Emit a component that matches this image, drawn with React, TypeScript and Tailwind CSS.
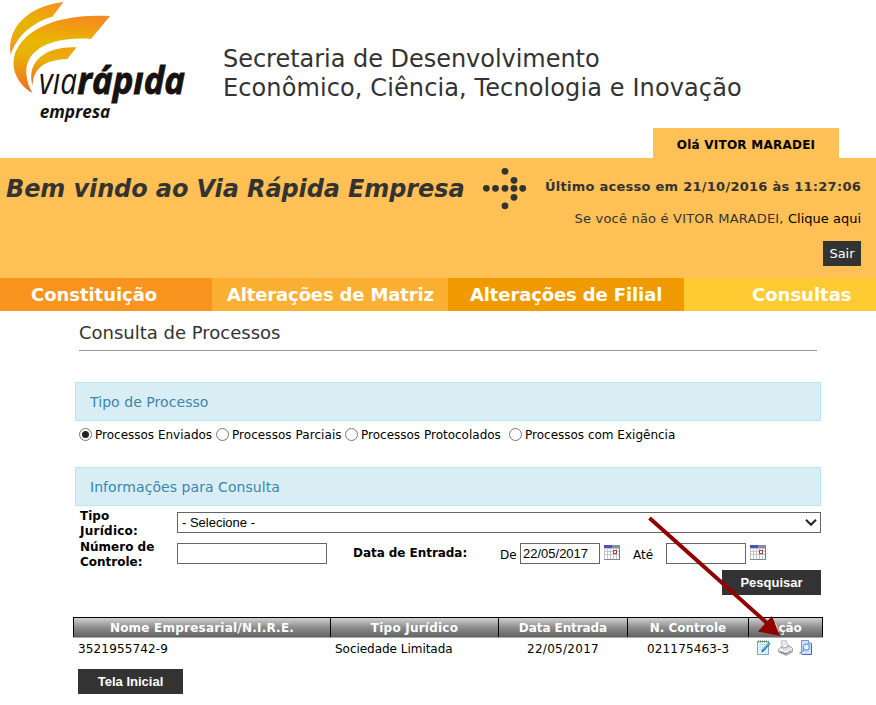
import type { ReactNode } from "react";

function Logo() {
  return (
    <svg width="220" height="128" viewBox="0 0 660 384" className="block shrink-0">
      <defs>
        <linearGradient id="flameOuter" x1="0.7" y1="0" x2="0.45" y2="1">
          <stop offset="0" stopColor="#f5921e" />
          <stop offset="0.42" stopColor="#e8b400" />
          <stop offset="0.7" stopColor="#e6ae08" />
          <stop offset="1" stopColor="#f5921e" />
        </linearGradient>
        <linearGradient id="flameMain" x1="0.6" y1="0" x2="0.5" y2="1">
          <stop offset="0" stopColor="#f58a1f" />
          <stop offset="0.34" stopColor="#e8b600" />
          <stop offset="0.55" stopColor="#e8b205" />
          <stop offset="1" stopColor="#f36f21" />
        </linearGradient>
        <linearGradient id="flameInner" x1="0.6" y1="0" x2="0.45" y2="1">
          <stop offset="0" stopColor="#f0a010" />
          <stop offset="0.35" stopColor="#e8b20a" />
          <stop offset="1" stopColor="#f36f21" />
        </linearGradient>
      </defs>
      <path d="M190 6 L157 50 C102 64 48 108 32 165 C20 85 80 20 190 6Z" fill="url(#flameOuter)" />
      <path d="M330 48 L273 117 C155 108 68 150 80 229 C82 248 88 265 98 279 C45 250 28 190 50 149 C88 75 195 40 330 48Z" fill="url(#flameMain)" />
      <path d="M230 142 L202 177 C145 178 98 200 98 257 C78 190 130 138 230 142Z" fill="url(#flameInner)" />
      <text x="117" y="281" textLength="114" lengthAdjust="spacingAndGlyphs" fill="#17120f" className="font-['Open_Sans',sans-serif] text-[110px] font-normal italic">vıa</text>
      <text x="232" y="281" textLength="323" lengthAdjust="spacingAndGlyphs" fill="#17120f" stroke="#17120f" strokeWidth="2.5" className="font-['Open_Sans',sans-serif] text-[110px] font-bold italic">rápıda</text>
      <text x="119" y="353" textLength="212" lengthAdjust="spacingAndGlyphs" fill="#17120f" className="font-['Open_Sans',sans-serif] text-[54px] font-bold italic">empresa</text>
    </svg>
  );
}

const dots = [[505, 171], [514, 180], [486.3, 188], [495.5, 188], [505, 188], [514, 188], [522.7, 188], [514, 197], [505, 205.5]];

function DotArrow() {
  return (
    <svg width="44" height="44" viewBox="483 167 44 44" className="ml-[16px] mt-[9px] block shrink-0">
      {dots.map(([x, y]) => (
        <circle key={`${x}-${y}`} cx={x} cy={y + 0.3} r="3.4" fill="#333" />
      ))}
    </svg>
  );
}

function SectionTitle({ children }: { children: ReactNode }) {
  return (
    <div className="ml-[75px] flex h-[39px] w-[746px] items-center border border-[#b8e8f0] bg-[#d9edf5] pl-[14px] pt-px text-[14px] tracking-[0.06px] text-[#3a87ad]">
      {children}
    </div>
  );
}

function Radio({ label, checked, className }: { label: string; checked?: boolean; className: string }) {
  return (
    <label className={`flex shrink-0 items-center whitespace-nowrap ${className}`}>
      <span className="-mt-[2px] mr-[3px] flex size-[13px] items-center justify-center rounded-full border border-[#777] bg-white">
        {checked && <span className="size-[7px] rounded-full bg-[#222]" />}
      </span>
      {label}
    </label>
  );
}

function CalendarIcon() {
  return (
    <svg width="16" height="15" viewBox="0 0 16 15" shapeRendering="crispEdges" className="block shrink-0">
      <rect width="16" height="15" fill="#c5c5ce" />
      <rect width="8" height="3" fill="#4a55b0" />
      <rect x="8" width="8" height="3" fill="#8b8b9b" />
      {[1, 4, 7, 10, 13].map((x) =>
        [4, 7, 10, 12].map((y) => <rect key={`${x}-${y}`} x={x} y={y} width="2" height="2" fill="#fff" />),
      )}
      <rect x="9.5" y="5.5" width="3" height="3" fill="#fff" stroke="#b03a3a" />
      <rect x="15" y="3" width="1" height="12" fill="#777" />
      <rect y="14" width="16" height="1" fill="#888" />
    </svg>
  );
}

function EditIcon() {
  return (
    <svg width="14" height="15" viewBox="0 0 14 15" className="block">
      <path d="M.5 1.5h11v13H.5z" fill="#e6f3fd" stroke="#7fa3c8" />
      <path d="M2.5 4.5h6M2.5 7h4M2.5 9.5h3M8 12.5h2" stroke="#bcd6ee" />
      <path d="M1 1.5h10.5" stroke="#4e8a62" strokeWidth="2" strokeDasharray="1 1" />
      <path d="M4.6 12l.8-3L11.6 2l2 1.6L7.4 10.9z" fill="#2f86c8" />
      <path d="M6.2 9.2l5.4-6" stroke="#8fe0ff" />
      <path d="M4.4 12.4l.6-2L6.4 11.5z" fill="#333" />
    </svg>
  );
}

function PrinterIcon() {
  return (
    <svg width="15" height="16" viewBox="0 0 15 16" className="block">
      <path d="M3 1l5-.7L10.5 7 5 9z" fill="#fff" stroke="#aab" strokeWidth=".8" />
      <path d="M4.3 3l3.8-.8M5 5l3.7-.9" stroke="#b5c5df" strokeWidth=".8" />
      <path d="M.6 9l3.6-2.6 1.2 1.8 4.9-1.8.1-1 3.9 2.7v4l-6 3.3L.6 12z" fill="#dcdee3" stroke="#858993" strokeWidth=".8" />
      <path d="M.9 9.3l7.4 2.5 5.6-3.4" fill="none" stroke="#fff" />
      <path d="M2 11.5l6 2.4 5-2.7" fill="none" stroke="#6a6f7c" strokeWidth="1" />
      <path d="M10 12.7l1.6-.8" stroke="#e1a63b" strokeWidth="1.2" />
    </svg>
  );
}

function PreviewIcon() {
  return (
    <svg width="14" height="15" viewBox="0 0 14 15" className="block">
      <path d="M2.5.5h7l3 3v11h-10z" fill="#cfe0fb" stroke="#7796d8" />
      <path d="M12.5 3.5v11h-9" fill="none" stroke="#4a68b4" />
      <path d="M9.5.5v3h3" fill="#fff" stroke="#7796d8" />
      <circle cx="7.3" cy="7.2" r="3" fill="#eefaff" stroke="#6a9ade" strokeWidth="1.2" />
      <path d="M5.1 9.5L1.2 13.2" stroke="#8ba8d0" strokeWidth="1.8" strokeLinecap="round" />
    </svg>
  );
}

const th = "flex h-[19px] items-center justify-center border-r border-black pt-px";

export default function App() {
  return (
    <div className="relative h-[705px] w-[876px] overflow-hidden bg-white font-['DejaVu_Sans',Verdana,sans-serif] text-[12px] leading-[15px] text-black">
      <header className="flex h-[128px]">
        <Logo />
        <h1 className="ml-[3px] mt-[45px] whitespace-nowrap text-[24px] leading-[29px] text-[#333]">
          <span className="tracking-[-0.03px]">Secretaria de Desenvolvimento</span>
          <br />
          <span className="tracking-[0.11px]">Econômico, Ciência, Tecnologia e Inovação</span>
        </h1>
      </header>
      <div className="ml-[653px] flex h-[30px] w-[186px] items-center justify-center bg-[#ffc055] pt-[4px] font-bold tracking-[0.24px]">
        Olá VITOR MARADEI
      </div>
      <section className="flex h-[120px] bg-[#ffc055] text-[#333]">
        <h2 className="ml-[6px] mt-[16px] w-[461px] whitespace-nowrap text-[24px] font-bold italic leading-[30px] tracking-[-0.11px]">
          Bem vindo ao Via Rápida Empresa
        </h2>
        <DotArrow />
        <div className="mr-[15px] flex flex-1 flex-col items-end whitespace-nowrap text-[13px] leading-[16px]">
          <p className="mt-[21px] font-bold tracking-[0.26px]">Último acesso em 21/10/2016 às 11:27:06</p>
          <p className="mt-[16px]">
            <span className="tracking-[0.2px]">Se você não é VITOR MARADEI, </span>
            <a className="text-black">Clique aqui</a>
          </p>
          <button className="mt-[14px] flex h-[25px] w-[38px] items-center justify-center bg-[#333] text-white">Sair</button>
        </div>
      </section>
      <nav className="flex h-[33px] whitespace-nowrap text-[18px] font-bold leading-[33px] text-white">
        <a className="w-[212px] bg-[#f9941e] pl-[31px] tracking-[-0.05px]">Constituição</a>
        <a className="w-[236px] bg-[#fbb034] pl-[15px] tracking-[-0.14px]">Alterações de Matriz</a>
        <a className="w-[236px] bg-[#f09a00] pl-[22px] tracking-[-0.12px]">Alterações de Filial</a>
        <a className="w-[192px] bg-[#ffcb33] pl-[68px]">Consultas</a>
      </nav>

      <main>
        <h3 className="ml-[78px] mr-[59px] mt-[11px] h-[29px] whitespace-nowrap pl-px text-[18px] leading-[22px] text-[#333]">
          Consulta de Processos
        </h3>
        <div className="mb-[31px] ml-[79px] -mt-px h-px w-[738px] bg-[#999]" />
        <SectionTitle>Tipo de Processo</SectionTitle>
        <div className="ml-[79px] mt-[6px] flex h-[16px]">
          <Radio label="Processos Enviados" checked className="w-[137px]" />
          <Radio label="Processos Parciais" className="w-[129px] tracking-[0.06px]" />
          <Radio label="Processos Protocolados" className="w-[164px]" />
          <Radio label="Processos com Exigência" className="w-[180px]" />
        </div>
        <div className="mt-[24px]">
          <SectionTitle>Informações para Consulta</SectionTitle>
        </div>

        <form className="ml-[75px] mt-[2px] w-[746px]">
          <div className="flex h-[31px]">
            <b className="mt-px w-[102px] pl-[5px]">
              Tipo
              <br />
              <span className="tracking-[0.25px]">Jurídico:</span>
            </b>
            <div className="mt-[4px] flex h-[21px] w-[644px] items-center justify-between border border-[#666] pl-[4px] pr-[3px] font-['Liberation_Sans',Arial,sans-serif] text-[13px]">
              <span>- Selecione -</span>
              <svg width="12" height="8" viewBox="0 0 12 8" className="block">
                <path d="M1 .8l5 5 5-5" fill="none" stroke="#222" strokeWidth="2" />
              </svg>
            </div>
          </div>
          <div className="flex h-[31px]">
            <b className="mt-px w-[102px] whitespace-nowrap pl-[5px]">
              Número de
              <br />
              Controle:
            </b>
            <div className="mt-[4px] h-[21px] w-[150px] border border-[#666]" />
            <b className="ml-[26px] mt-[7px] w-[147px] whitespace-nowrap tracking-[-0.05px]">Data de Entrada:</b>
            <span className="mt-[9px] w-[20px]">De</span>
            <div className="mt-[4px] flex h-[21px] w-[80px] items-center border border-[#666] pl-[2px] font-['Liberation_Sans',Arial,sans-serif] text-[13px]">
              22/05/2017
            </div>
            <span className="ml-[4px] mt-[6px]">
              <CalendarIcon />
            </span>
            <span className="ml-[13px] mt-[9px] w-[33px]">Até</span>
            <div className="mt-[4px] h-[21px] w-[80px] border border-[#666]" />
            <span className="ml-[4px] mt-[6px]">
              <CalendarIcon />
            </span>
          </div>
          <div className="flex justify-end">
            <span className="flex h-[25px] w-[99px] items-center justify-center bg-[#333] font-['Liberation_Sans',Arial,sans-serif] text-[13px] font-bold text-white">
              Pesquisar
            </span>
          </div>
        </form>

        <div className="ml-[73px] mt-[22px] w-[750px] whitespace-nowrap">
          <div className="flex h-[20px] border-l border-t border-black bg-linear-to-b from-[#d2d2d2] via-[#8d8d8d] to-[#626262] font-bold text-white">
            <div className={`${th} w-[257px] tracking-[0.22px]`}>Nome Empresarial/N.I.R.E.</div>
            <div className={`${th} w-[168px] tracking-[0.22px]`}>Tipo Jurídico</div>
            <div className={`${th} w-[129px] tracking-[-0.08px]`}>Data Entrada</div>
            <div className={`${th} w-[121px]`}>N. Controle</div>
            <div className={`${th} w-[74px] tracking-[-0.2px]`}>Ação</div>
          </div>
          <div className="h-px bg-[#aaa]" />
          <div className="flex h-[22px] items-center">
            <div className="w-[257px] pl-[5px] tracking-[0.15px]">3521955742-9</div>
            <div className="w-[168px] pl-[5px] tracking-[-0.03px]">Sociedade Limitada</div>
            <div className="w-[129px] pl-[29px] tracking-[0.28px]">22/05/2017</div>
            <div className="w-[121px] pl-[20px] tracking-[0.15px]">021175463-3</div>
            <div className="mb-[4px] flex items-center pl-[9px]">
              <EditIcon />
              <span className="ml-[7px] mt-[2px]">
                <PrinterIcon />
              </span>
              <span className="ml-[6px]">
                <PreviewIcon />
              </span>
            </div>
          </div>
        </div>
        <div className="ml-[78px] mt-[9px] flex h-[25px] w-[105px] items-center justify-center bg-[#333] font-['Liberation_Sans',Arial,sans-serif] text-[13px] font-bold text-white">
          Tela Inicial
        </div>
      </main>

      <svg width="140" height="125" viewBox="645 513 140 125" className="pointer-events-none absolute left-[645px] top-[513px]">
        <path d="M649.5 518L768 624" stroke="#900000" strokeWidth="4" />
        <path d="M780 636L758 631.5L772 616Z" fill="#900000" />
      </svg>
    </div>
  );
}
